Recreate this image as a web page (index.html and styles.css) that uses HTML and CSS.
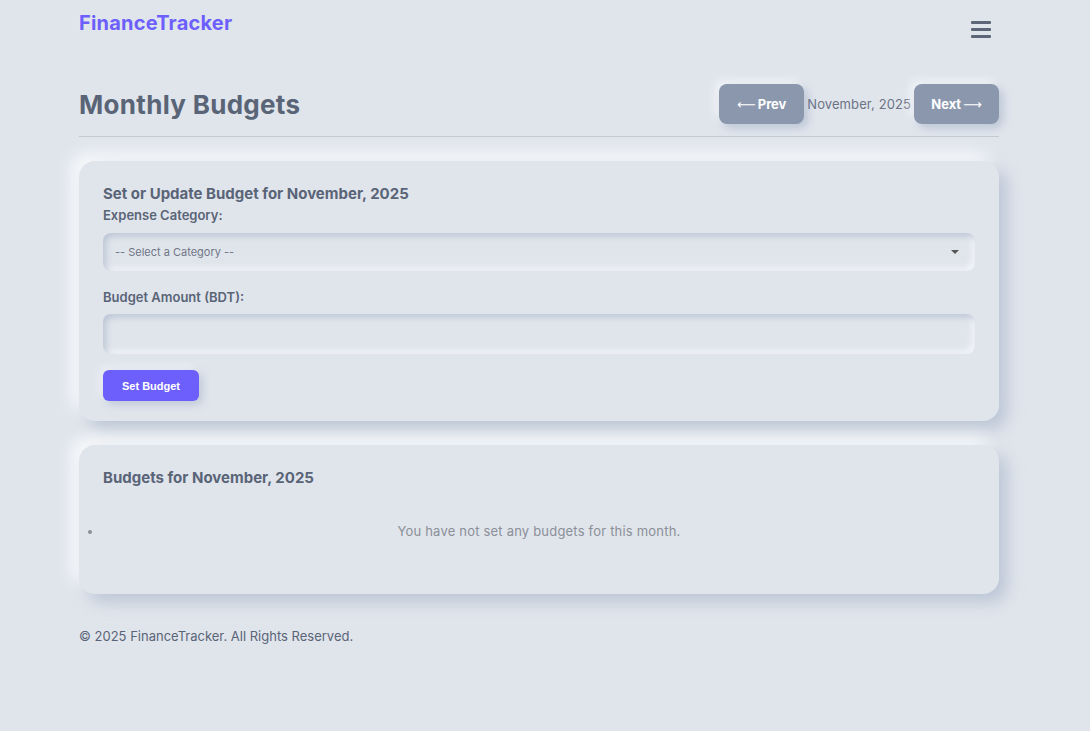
FILE: index.html
```html
<!DOCTYPE html>
<html>
<head>
    <meta charset="UTF-8">
    <meta name="viewport" content="width=device-width, initial-scale=1.0">
    <title>Monthly Budgets - FinanceTracker</title>
    <link rel="stylesheet" href="styles.css">
</head>
<body>
    <header class="topbar">
        <a class="logo" href="#">FinanceTracker</a>
        <button class="menu-toggle" aria-label="Menu">
            <span></span><span></span><span></span>
        </button>
    </header>

    <main class="container">
        <div class="page-head">
            <h1>Monthly Budgets</h1>
            <div class="month-nav">
                <a class="nav-btn" href="#"><span class="arrow">&#x27F5;</span>Prev</a>
                <span class="month-label">November, 2025</span>
                <a class="nav-btn" href="#">Next<span class="arrow">&#x27F6;</span></a>
            </div>
        </div>

        <section class="card">
            <h3>Set or Update Budget for November, 2025</h3>
            <form class="budget-form">
                <label for="category">Expense Category:</label>
                <div class="select-wrap">
                    <select id="category">
                        <option>-- Select a Category --</option>
                    </select>
                </div>
                <label for="amount">Budget Amount (BDT):</label>
                <input type="text" id="amount">
                <button type="button" class="btn-primary">Set Budget</button>
            </form>
        </section>

        <section class="card">
            <h3>Budgets for November, 2025</h3>
            <ul class="budget-list">
                <li class="empty">You have not set any budgets for this month.</li>
            </ul>
        </section>
    </main>

    <footer class="container">&copy; 2025 FinanceTracker. All Rights Reserved.</footer>
</body>
</html>
```

FILE: styles.css
```css
:root {
    --bg: #e0e5ec;
    --text: #5a6477;
    --muted: #8b8f97;
    --accent: #6c5ffc;
    --slate: #8a97ad;
    --shadow-dark: rgba(163, 177, 198, 0.6);
    --shadow-light: rgba(255, 255, 255, 0.6);
}
* {
    box-sizing: border-box;
}
body {
    margin: 0;
    padding: 0 91px 0 79px;
    background-color: var(--bg);
    color: var(--text);
    font-family: 'Inter', 'Open Sans', sans-serif;
    min-height: 100vh;
}
.topbar {
    display: flex;
    justify-content: space-between;
    align-items: flex-start;
    height: 62px;
}
.logo {
    margin-top: 11px;
    font-size: 20px;
    font-weight: 700;
    color: var(--accent);
    text-decoration: none;
    letter-spacing: 0.2px;
}
.menu-toggle {
    margin-top: 21px;
    margin-right: 8px;
    width: 20px;
    padding: 0;
    border: none;
    background: none;
    display: flex;
    flex-direction: column;
    gap: 4px;
}
.menu-toggle span {
    display: block;
    width: 20px;
    height: 3px;
    border-radius: 1px;
    background-color: #5d6678;
}
.page-head {
    display: flex;
    justify-content: space-between;
    align-items: center;
    padding: 22px 0 12px;
    border-bottom: 1px solid #c5c9d2;
}
.page-head h1 {
    margin: 0;
    font-size: 26px;
    font-weight: 700;
    letter-spacing: 0.3px;
    color: var(--text);
}
.month-nav {
    display: flex;
    align-items: center;
    gap: 3px;
}
.nav-btn {
    display: inline-flex;
    align-items: center;
    justify-content: center;
    gap: 2px;
    width: 85px;
    height: 40px;
    border-radius: 8px;
    background-color: var(--slate);
    color: #fff;
    font-size: 13px;
    font-weight: 700;
    text-decoration: none;
    box-shadow: 4px 4px 8px var(--shadow-dark), -4px -4px 8px var(--shadow-light);
}
.nav-btn .arrow {
    font-family: 'DejaVu Sans', sans-serif;
    font-weight: 400;
    font-size: 13px;
}
.month-label {
    font-size: 13px;
    color: #6b7385;
    letter-spacing: 0.1px;
}
.card {
    margin-top: 24px;
    padding: 23px 24px 20px;
    border-radius: 16px;
    background-color: var(--bg);
    box-shadow: 8px 8px 16px var(--shadow-dark), -8px -8px 16px rgba(255, 255, 255, 0.8);
}
.card h3 {
    margin: 0;
    font-size: 15px;
    font-weight: 700;
    color: var(--text);
}
.budget-form {
    display: flex;
    flex-direction: column;
}
.budget-form label {
    margin-top: 4px;
    font-size: 13px;
    font-weight: 600;
    color: var(--text);
}
.select-wrap {
    position: relative;
    margin-top: 10px;
    margin-bottom: 14px;
}
.select-wrap::after {
    content: "";
    position: absolute;
    right: 16px;
    top: 17px;
    border-left: 4px solid transparent;
    border-right: 4px solid transparent;
    border-top: 4px solid #555;
}
.budget-form select,
.budget-form input {
    width: 100%;
    border: none;
    outline: none;
    border-radius: 8px;
    background-color: var(--bg);
    color: var(--text);
    font-family: inherit;
    box-shadow: inset 3px 3px 6px var(--shadow-dark), inset -3px -3px 6px rgba(255, 255, 255, 0.7);
}
.budget-form select {
    appearance: none;
    height: 38px;
    padding: 0 12px;
    font-size: 11px;
    color: #6f7685;
}
.budget-form input {
    margin-top: 9px;
    height: 40px;
    padding: 0 12px;
}
.btn-primary {
    align-self: flex-start;
    margin-top: 16px;
    width: 96px;
    height: 31px;
    border: none;
    border-radius: 6px;
    background-color: var(--accent);
    color: #fff;
    font-family: 'Liberation Sans', Arial, sans-serif;
    font-size: 11px;
    font-weight: 700;
    box-shadow: 3px 3px 8px var(--shadow-dark), -3px -3px 8px var(--shadow-light);
}
.budget-list {
    margin: 0;
    padding: 36px 0 35px;
    color: var(--muted);
}
.budget-list .empty {
    text-align: center;
    font-size: 13px;
    letter-spacing: 0.2px;
}
footer.container {
    padding: 34px 0;
    font-size: 13px;
    color: var(--text);
}
```
